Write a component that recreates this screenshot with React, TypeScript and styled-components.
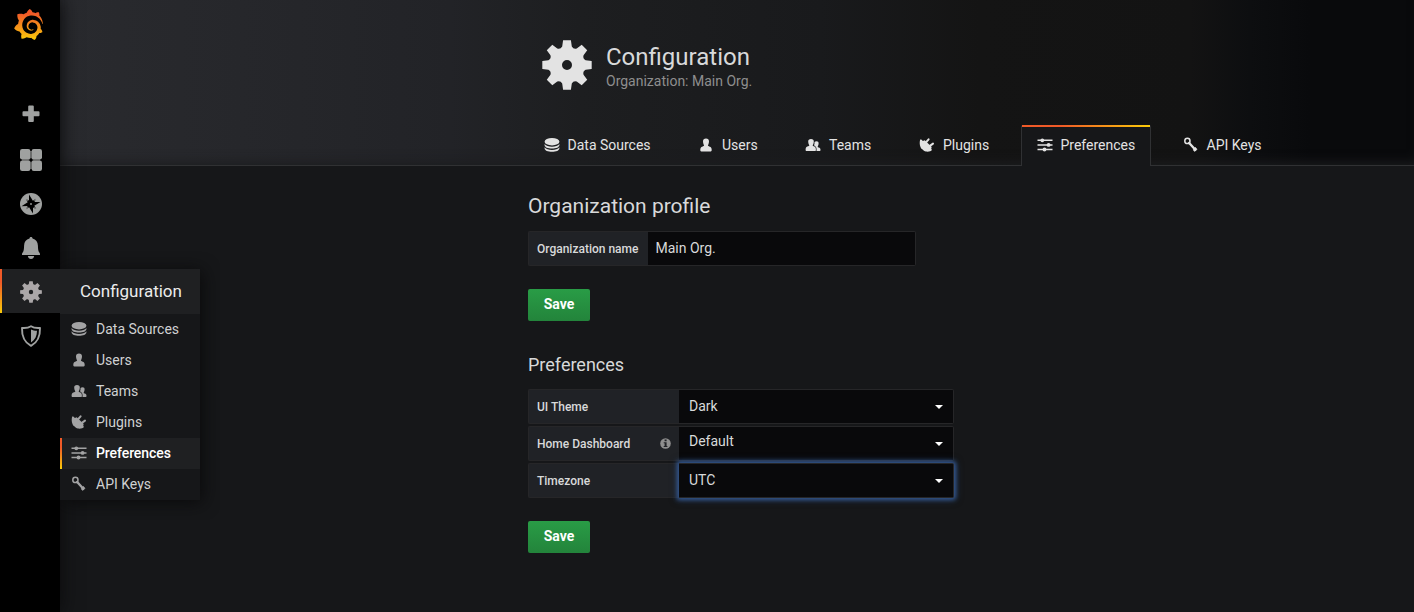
import React from 'react';
import styled, { createGlobalStyle, css } from 'styled-components';
import { SiGrafana } from 'react-icons/si';

const GlobalStyle = createGlobalStyle`
  *, *::before, *::after { box-sizing: border-box; }
  html, body { margin: 0; padding: 0; background: #161719; }
  body {
    font-family: Roboto, 'Liberation Sans', sans-serif;
    font-size: 14px;
    line-height: 20px;
    color: #d8d9da;
    overflow: hidden;
  }
  svg { display: block; flex: none; }
`;

/* ---------- icons ---------- */

type IconProps = { size?: number };

const gearPath = (() => {
  const at = (deg: number, r: number) => {
    const a = ((deg - 90) * Math.PI) / 180;
    return `${(25 + r * Math.cos(a)).toFixed(2)} ${(25 + r * Math.sin(a)).toFixed(2)}`;
  };
  let d = '';
  for (let k = 0; k < 8; k++) {
    const c = k * 45;
    d += `${k ? 'L' : 'M'}${at(c - 14.5, 19.2)}L${at(c - 9, 25)}L${at(c + 9, 25)}L${at(c + 14.5, 19.2)}`;
    d += `Q${at(c + 22.5, 16.8)} ${at(c + 30.5, 19.2)}`;
  }
  return `${d}ZM30 25a5 5 0 1 0-10 0a5 5 0 1 0 10 0Z`;
})();

const GearIcon = ({ size = 50 }: IconProps) => (
  <svg width={size} height={size} viewBox="0 0 50 50" fill="currentColor">
    <path fillRule="evenodd" d={gearPath} />
  </svg>
);

const DatabaseIcon = ({ size = 16 }: IconProps) => (
  <svg width={size} height={size} viewBox="0 0 16 16" fill="currentColor">
    <ellipse cx="8" cy="4.7" rx="7.4" ry="3.7" />
    <path d="M.6 7.1C2 9 4.700 9.700 8 9.700s6-.7 7.400-2.600v1.200C15.200 10.300 12 11.600 8 11.600S.8 10.300.6 8.300Z" />
    <path d="M.6 10.300C2 12.200 4.700 12.900 8 12.900s6-.7 7.400-2.600v1.200C15.200 13.500 12 14.800 8 14.800S.8 13.500.6 11.500Z" />
  </svg>
);

const UserIcon = ({ size = 16 }: IconProps) => (
  <svg width={size} height={size} viewBox="0 0 16 16" fill="currentColor">
    <path d="M8 1.500C9.900 1.500 11.100 2.600 11 4.400C10.900 6.300 10.400 7.500 9.900 8.300C9.900 9.100 10.800 9.300 12 9.700C13.300 10.200 13.700 11.300 13.700 13.100C13.700 14 13.400 14.400 12.700 14.400H3.300C2.600 14.400 2.300 14 2.300 13.100C2.300 11.300 2.700 10.200 4 9.700C5.200 9.300 6.100 9.100 6.100 8.300C5.600 7.500 5.100 6.300 5 4.400C4.900 2.600 6.100 1.500 8 1.500Z" />
  </svg>
);

const TeamIcon = ({ size = 16 }: IconProps) => (
  <svg width={size} height={size} viewBox="0 0 16 16" fill="currentColor">
    <path d="M6 2C7.900 2 8.900 3 8.800 4.600C8.700 6.300 8.300 7.500 7.700 8.200C7.700 9 8.400 9.200 9.400 9.600C10.600 10.100 10.900 11.300 10.900 12.800C10.900 13.700 10.700 14.100 10.100 14.100H1.500C.9 14.100.6 13.700.6 12.800C.6 11.300 1 10.100 2.300 9.600C3.500 9.200 4.300 9 4.300 8.200C3.700 7.500 3.300 6.300 3.200 4.600C3.100 3 4.100 2 6 2Z" />
    <path d="M11.500 4.300C13 4.300 13.700 5.200 13.600 6.500C13.500 7.900 13.100 8.900 12.700 9.400C12.700 10.100 13.200 10.200 14 10.500C15.200 10.900 15.500 12 15.500 13.100C15.500 13.700 15.300 14.100 14.800 14.100H11.500C11.700 11.500 11.700 9.900 9.700 8.900C9.400 8.700 9.200 8.500 9.100 8.100C9.500 7.200 9.600 6 9.500 4.900C10 4.500 10.700 4.300 11.500 4.300Z" />
  </svg>
);

const PlugIcon = ({ size = 16 }: IconProps) => (
  <svg width={size} height={size} viewBox="0 0 16 16" fill="currentColor">
    <path d="M1.200 2.600L2.300 2.600L3.900 4.100L5.800 3.200L12.700 10L12.200 11.600L12.900 13C12 14.200 9.500 15 6.900 14.500C5.600 14.200 4.300 13.500 3.300 12.300L2.200 11.500L1.500 10C.5 8.200.5 4.700 1.200 2.600Z" />
    <path d="M7 5.400L9.600 2.300M10.900 8.900L14 6.600" stroke="currentColor" strokeWidth="2" strokeLinecap="round" />
  </svg>
);

const SlidersIcon = ({ size = 16 }: IconProps) => (
  <svg width={size} height={size} viewBox="0 0 16 16" fill="currentColor">
    <path d="M.5 3.300h15M.5 7.900h15M.5 12.500h15" stroke="currentColor" strokeWidth="1.500" />
    <circle cx="5.300" cy="3.300" r="1.900" />
    <circle cx="11.600" cy="7.900" r="1.900" />
    <circle cx="7.500" cy="12.500" r="1.900" />
  </svg>
);

const KeyIcon = ({ size = 16 }: IconProps) => (
  <svg width={size} height={size} viewBox="0 0 16 16" fill="none" stroke="currentColor">
    <circle cx="4.400" cy="3.900" r="2.600" strokeWidth="1.500" />
    <path d="M6.200 5.900L12.300 12.800" strokeWidth="2.300" strokeLinecap="round" />
    <path d="M12.300 10.300L14 12.200L11.700 14.500L10.200 12.900Z" strokeWidth=".6" strokeLinejoin="round" fill="currentColor" />
  </svg>
);

const PlusIcon = () => (
  <svg width="22" height="22" viewBox="0 0 22 22" fill="currentColor">
    <path d="M8.200 3.500q0-1 1-1h3.600q1 0 1 1v4.700h4.700q1 0 1 1v3.100q0 1-1 1h-4.700v4.700q0 1-1 1H9.200q-1 0-1-1v-4.700H3.500q-1 0-1-1V9.200q0-1 1-1h4.700Z" />
  </svg>
);

const AppsIcon = () => (
  <svg width="22" height="22" viewBox="0 0 22 22" fill="currentColor">
    <rect width="10.400" height="10.400" rx="2.200" />
    <rect x="11.600" width="10.400" height="10.400" rx="2.200" />
    <rect y="11.600" width="10.400" height="10.400" rx="2.200" />
    <rect x="11.600" y="11.600" width="10.400" height="10.400" rx="2.200" />
    <path opacity=".45" d="M2 10h7.500v2H2ZM12.500 10H20v2h-7.500ZM10 2h2v7.500h-2ZM10 12.500h2V20h-2Z" />
  </svg>
);

const CompassIcon = () => (
  <svg width="22" height="22" viewBox="0 0 22 22">
    <circle cx="11" cy="11" r="11" fill="currentColor" />
    <path
      fill="#000"
      d="M9 1.500L12.900 7.700L15.900 5.700L14.500 8.900L20.500 9L14.300 12.800L16.200 16L13 14.400L13 20.500L9.100 14.300L6 16.300L7.600 13L1.500 13.200L7.700 9.200L5.900 6L9 7.500Z"
    />
    <path stroke="currentColor" strokeWidth=".6" d="M6 6L8 8M16 6L14 8M6 16L8 14M16 16L14 14" />
    <circle cx="11" cy="11" r=".9" fill="currentColor" />
  </svg>
);

const BellIcon = () => (
  <svg width="22" height="22" viewBox="0 0 22 22" fill="currentColor">
    <path d="M11 0c1 0 1.500.7 1.500 1.500C16 2.300 17.800 5 17.900 8.500C18 12.500 18.300 14.300 19.300 15.600C19.900 16.300 20 16.800 20 18H2C2 16.800 2.100 16.300 2.700 15.600C3.700 14.300 4 12.500 4.100 8.500C4.200 5 6 2.300 9.500 1.500C9.500.7 10 0 11 0Z" />
    <path d="M7.900 19h6.200c0 1.500-1.100 3-3.100 3s-3.100-1.500-3.100-3Z" />
  </svg>
);

const ShieldIcon = () => (
  <svg width="22" height="22" viewBox="0 0 22 22">
    <path
      fill="none"
      stroke="currentColor"
      strokeWidth="1.900"
      strokeLinejoin="round"
      d="M11 1.200C13.600 2.900 16.500 3.200 20 2.900C20.300 11.500 17.500 17.500 11 20.900C4.500 17.500 1.700 11.500 2 2.900C5.500 3.200 8.400 2.900 11 1.200Z"
    />
    <path fill="currentColor" d="M11 4.400C12.700 5.300 14.700 5.700 17 5.700C16.900 11 15 14.900 11 17.500Z" />
  </svg>
);

const InfoIcon = () => (
  <svg width="11" height="11" viewBox="0 0 11 11">
    <circle cx="5.500" cy="5.500" r="5.300" fill="#8e8e8e" />
    <path fill="#202226" d="M4.600 1.600h2v1.600h-2ZM3.700 4.200h2.900v3.700h.8V9H3.700V7.900h.9V5.300h-.9Z" />
  </svg>
);

/* ---------- side menu ---------- */

const Page = styled.div`
  display: flex;
  width: 1414px;
  height: 612px;
`;

const SideMenu = styled.nav`
  position: relative;
  z-index: 2;
  width: 60px;
  flex: none;
  background: #000;
  box-shadow: 0 0 18px #0a0a0b;
`;

const Logo = styled.div`
  display: flex;
  height: 92px;
  padding: 9px 0 0 12.5px;
`;

const GradientDefs = styled.svg`
  width: 0;
  height: 0;
`;

const accentBar = css`
  &::before {
    content: '';
    position: absolute;
    left: 0;
    top: 0;
    bottom: 0;
    width: 2px;
    background: linear-gradient(#f05a28 30%, #fbca0a 99%);
  }
`;

const SideItem = styled.div<{ $active?: boolean; $height?: number }>`
  position: relative;
  height: ${p => p.$height ?? 44}px;
  padding: ${p => (p.$height ? 11 : 12)}px 0 0 20px;
  color: ${p => (p.$active ? '#aba7a8' : '#9fa1a0')};
  background: ${p => (p.$active ? '#1f2022' : 'transparent')};
  ${p => p.$active && accentBar}
`;

const Flyout = styled.div`
  position: absolute;
  top: 0;
  left: 60px;
  width: 140px;
  background: #161719;
  box-shadow: 2px 2px 16px #0a0a0b;
  clip-path: inset(-18px -20px -20px 0);
`;

const FlyoutTitle = styled.div`
  height: 45px;
  padding-left: 20px;
  font-size: 17px;
  line-height: 45px;
  color: #ececec;
  background: #1f2022;
`;

const FlyoutItem = styled.div<{ $active?: boolean }>`
  position: relative;
  display: flex;
  align-items: center;
  gap: 9px;
  height: 31px;
  padding: 0 0 1px 11px;
  color: ${p => (p.$active ? '#fff' : '#d0d1d2')};
  font-weight: ${p => (p.$active ? 500 : 400)};
  background: ${p => (p.$active ? '#1f2022' : 'transparent')};
  letter-spacing: ${p => (p.$active ? '-0.08px' : 'normal')};
  ${p => p.$active && accentBar}
  & > svg { color: #a3a3a4; }
`;

/* ---------- header ---------- */

const Main = styled.main`
  flex: 1;
  min-width: 0;
`;

const Header = styled.header`
  height: 166px;
  padding: 40px 0 0 468px;
  border-bottom: 1px solid #303133;
  background: linear-gradient(
    90deg,
    #292a2e 0,
    #25262a 240px,
    #222327 390px,
    #1d1e20 520px,
    #191a1c 760px,
    #141414 920px,
    #131313 1130px,
    #0d0e10 1190px,
    #090a0c 1250px
  );
  box-shadow: inset 0 -8px 12px -6px #1c1d1f;
`;

const Heading = styled.div`
  display: flex;
  gap: 14px;
  height: 85px;
  padding-left: 14px;
  color: #e3e3e3;
`;

const Title = styled.h1`
  margin: 2px 0 0;
  font-size: 24px;
  font-weight: 400;
  line-height: 30px;
  color: #d8d9da;
`;

const Subtitle = styled.div`
  font-size: 14px;
  line-height: 19px;
  color: #8e8e8e;
`;

const Tabs = styled.div`
  display: flex;
`;

const Tab = styled.div<{ $width: number; $active?: boolean }>`
  position: relative;
  display: flex;
  align-items: center;
  gap: 8px;
  width: ${p => p.$width}px;
  height: 40px;
  padding-left: 15.5px;
  color: #e3e3e3;
  ${p =>
    p.$active &&
    css`
      height: 41px;
      margin-right: 16px;
      padding: 0 0 1px 14.5px;
      border: 1px solid #303133;
      border-width: 0 1px;
      border-radius: 2px 2px 0 0;
      background: #161719;
      &::before {
        content: '';
        position: absolute;
        inset: 0 0 auto;
        height: 2px;
        background: linear-gradient(90deg, #f05a28 30%, #fbca0a 99%);
      }
    `}
`;

/* ---------- forms ---------- */

const Content = styled.div`
  padding: 25px 0 0 468px;
`;

const SectionTitle = styled.h2<{ $size: number; $gap: number }>`
  margin: 0 0 ${p => p.$gap}px;
  font-size: ${p => p.$size}px;
  font-weight: 400;
  line-height: 30px;
  color: #d8d9da;
`;

const FieldRow = styled.div`
  display: flex;
  height: 35px;
  margin-bottom: 2px;
`;

const FieldLabel = styled.label<{ $width: number }>`
  display: flex;
  align-items: center;
  justify-content: space-between;
  width: ${p => p.$width}px;
  padding: 0 8px;
  border: 1px solid #262628;
  border-right: 0;
  border-radius: 2px 0 0 2px;
  background: #202226;
  font-size: 12px;
  font-weight: 500;
`;

const control = css`
  border: 1px solid #262628;
  border-left: 0;
  border-radius: 0 2px 2px 0;
  background: #09090b;
  color: #d8d9da;
`;

const TextInput = styled.input`
  ${control}
  width: 268px;
  padding: 0 7.5px 1px;
  font: inherit;
  outline: none;
`;

const SelectBox = styled.div<{ $focus?: boolean; $lift?: number }>`
  ${control}
  position: relative;
  display: flex;
  align-items: center;
  justify-content: space-between;
  width: 275px;
  padding: 0 10px;
  & > span { margin-top: -${p => p.$lift ?? 1}px; }
  ${p =>
    p.$focus &&
    css`
      box-shadow: 0 0 4px 1.5px #33578f, 0 0 9px 1px #2b4a7a80;
    `}
`;

const Caret = styled.i`
  margin-top: 1px;
  border: 4px solid transparent;
  border-top-color: #fff;
  border-bottom: 0;
`;

const SaveButton = styled.button`
  display: block;
  width: 62px;
  height: 32px;
  margin: 23px 0 29px;
  padding: 0 0 2px;
  border: 0;
  border-radius: 2px;
  background: linear-gradient(#299c46, #23843b);
  color: #fff;
  font: 700 14px Roboto, sans-serif;
`;

const sections = [
  { label: 'Data Sources', Icon: DatabaseIcon, width: 154.5 },
  { label: 'Users', Icon: UserIcon, width: 107 },
  { label: 'Teams', Icon: TeamIcon, width: 114 },
  { label: 'Plugins', Icon: PlugIcon, width: 117.5 },
  { label: 'Preferences', Icon: SlidersIcon, width: 130, active: true },
  { label: 'API Keys', Icon: KeyIcon, width: 110 },
];

const Select = ({ value, focus, lift }: { value: string; focus?: boolean; lift?: number }) => (
  <SelectBox $focus={focus} $lift={lift}>
    <span>{value}</span>
    <Caret />
  </SelectBox>
);

export default function App() {
  return (
    <>
      <GlobalStyle />
      <Page>
        <SideMenu>
          <Logo>
            <SiGrafana size={31} fill="url(#brand)" />
            <GradientDefs>
              <defs>
                <linearGradient id="brand" x1="0" y1="0" x2="0" y2="1">
                  <stop offset=".15" stopColor="#f05a28" />
                  <stop offset="1" stopColor="#fbca0a" />
                </linearGradient>
              </defs>
            </GradientDefs>
          </Logo>
          <SideItem $height={46}><PlusIcon /></SideItem>
          <SideItem $height={43}><AppsIcon /></SideItem>
          <SideItem><CompassIcon /></SideItem>
          <SideItem><BellIcon /></SideItem>
          <SideItem $active>
            <GearIcon size={22} />
            <Flyout>
              <FlyoutTitle>Configuration</FlyoutTitle>
              {sections.map(({ label, Icon, active }) => (
                <FlyoutItem key={label} $active={active}>
                  <Icon />
                  {label}
                </FlyoutItem>
              ))}
            </Flyout>
          </SideItem>
          <SideItem><ShieldIcon /></SideItem>
        </SideMenu>
        <Main>
          <Header>
            <Heading>
              <GearIcon />
              <div>
                <Title>Configuration</Title>
                <Subtitle>Organization: Main Org.</Subtitle>
              </div>
            </Heading>
            <Tabs>
              {sections.map(({ label, Icon, width, active }) => (
                <Tab key={label} $width={width} $active={active}>
                  <Icon />
                  {label}
                </Tab>
              ))}
            </Tabs>
          </Header>
          <Content>
            <SectionTitle $size={21} $gap={10}>Organization profile</SectionTitle>
            <FieldRow>
              <FieldLabel $width={120}>Organization name</FieldLabel>
              <TextInput defaultValue="Main Org." />
            </FieldRow>
            <SaveButton>Save</SaveButton>
            <SectionTitle $size={18} $gap={9}>Preferences</SectionTitle>
            <FieldRow>
              <FieldLabel $width={151}>UI Theme</FieldLabel>
              <Select value="Dark" />
            </FieldRow>
            <FieldRow>
              <FieldLabel $width={151}>
                Home Dashboard <InfoIcon />
              </FieldLabel>
              <Select value="Default" lift={5} />
            </FieldRow>
            <FieldRow>
              <FieldLabel $width={151}>Timezone</FieldLabel>
              <Select value="UTC" focus />
            </FieldRow>
            <SaveButton>Save</SaveButton>
          </Content>
        </Main>
      </Page>
    </>
  );
}
